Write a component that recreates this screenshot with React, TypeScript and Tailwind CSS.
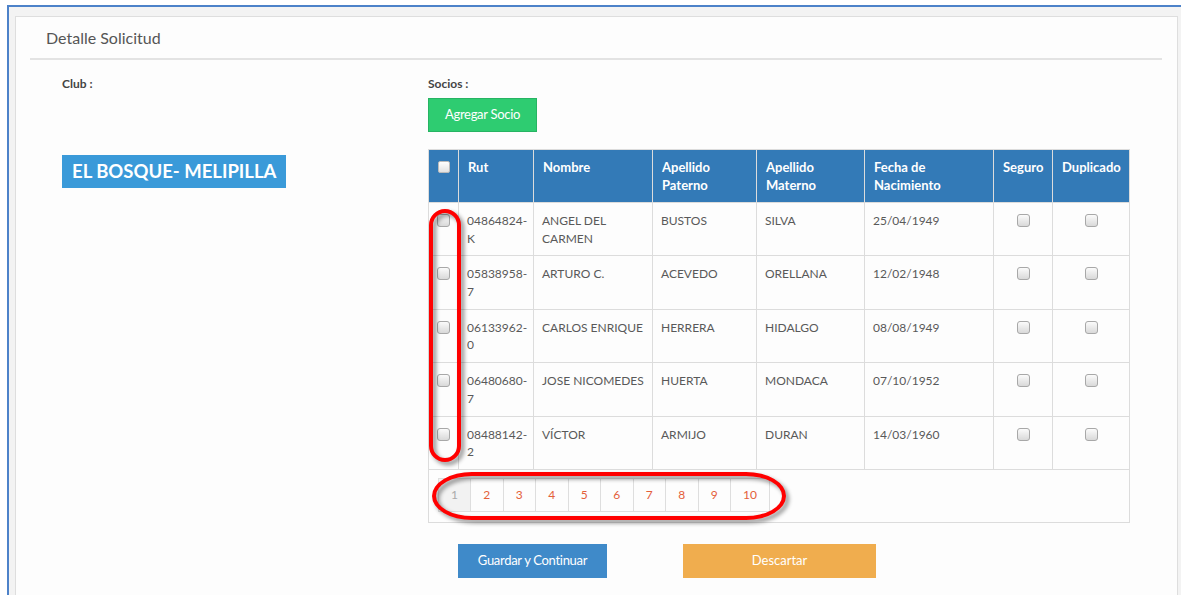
import React from "react"

type Socio = {
  rut: string
  nombre: string
  paterno: string
  materno: string
  nacimiento: string
}

const socios: Socio[] = [
  { rut: "04864824-K", nombre: "ANGEL DEL CARMEN", paterno: "BUSTOS", materno: "SILVA", nacimiento: "25/04/1949" },
  { rut: "05838958-7", nombre: "ARTURO C.", paterno: "ACEVEDO", materno: "ORELLANA", nacimiento: "12/02/1948" },
  { rut: "06133962-0", nombre: "CARLOS ENRIQUE", paterno: "HERRERA", materno: "HIDALGO", nacimiento: "08/08/1949" },
  { rut: "06480680-7", nombre: "JOSE NICOMEDES", paterno: "HUERTA", materno: "MONDACA", nacimiento: "07/10/1952" },
  { rut: "08488142-2", nombre: "VÍCTOR", paterno: "ARMIJO", materno: "DURAN", nacimiento: "14/03/1960" },
]

const pages = ["1", "2", "3", "4", "5", "6", "7", "8", "9", "10"]

function Check() {
  return (
    <div className="h-[17px] flex items-center justify-center">
      <span className="inline-block w-[13px] h-[13px] rounded-[3px] border border-[#a8a8a8] bg-linear-to-b from-[#fbfbfb] to-[#d9d9d9]" />
    </div>
  )
}

function HeadCell({ children, w }: { children?: React.ReactNode; w: string }) {
  return (
    <th className={`${w} border border-[#dcdcdc] bg-[#337ab7] align-top text-left px-[9px] pt-[8px] font-bold text-[13px] leading-[18px] text-white`}>
      {children}
    </th>
  )
}

function Cell({ children, center }: { children?: React.ReactNode; center?: boolean }) {
  return (
    <td className={`border border-[#dcdcdc] align-top px-[8px] pt-[9px] text-[12px] leading-[17.5px] text-[#595959] ${center ? "text-center" : ""}`}>
      {children}
    </td>
  )
}

export default function App() {
  return (
    <div className="w-[1181px] h-[595px] overflow-hidden bg-white font-['Lato',sans-serif]">
      <div className="ml-[7px] mt-[5px] h-[620px] border-t-2 border-l-2 border-[#4d82c9] bg-[#f3f3f3] pl-[6px] pt-[9px] pr-[3px]">
        <div className="h-full border border-[#dedede] bg-[#fdfdfd]">
          {/* panel heading */}
          <div className="mx-[14px] mr-[15px] border-b-2 border-[#e3e3e3] pl-[16px] pt-[10px] pb-[9px]">
            <div className="text-[16px] leading-[22px] text-[#555]">Detalle Solicitud</div>
          </div>

          <div className="flex pl-[46px] pt-[16px]">
            {/* club */}
            <div className="w-[366px]">
              <div className="text-[12px] leading-[16px] font-bold text-[#444]">Club :</div>
              <div className="mt-[63px] inline-block bg-[#3a9ad9] px-[10px] py-[5px] text-[18.5px] leading-[23px] font-bold text-white">
                EL BOSQUE- MELIPILLA
              </div>
            </div>

            {/* socios */}
            <div className="flex-1">
              <div className="text-[12px] leading-[16px] font-bold text-[#444]">Socios :</div>
              <button className="mt-[6px] h-[34px] w-[109px] border border-[#27b463] bg-[#2ecc71] text-[13px] text-white tracking-[-0.3px]">
                Agregar Socio
              </button>

              <div className="relative mt-[17px] w-[701px]">
                <table className="w-[701px] table-fixed border-collapse">
                  <thead>
                    <tr className="h-[53px]">
                      <th className="w-[30px] border border-[#dcdcdc] bg-[#337ab7] align-top pt-[8px]">
                        <div className="h-[18px] flex items-center justify-center">
                          <span className="inline-block w-[12px] h-[12px] rounded-[2px] border border-[#bbb] bg-linear-to-b from-white to-[#e2e2e2]" />
                        </div>
                      </th>
                      <HeadCell w="w-[75px]">Rut</HeadCell>
                      <HeadCell w="w-[119px]">Nombre</HeadCell>
                      <HeadCell w="w-[104px]">Apellido Paterno</HeadCell>
                      <HeadCell w="w-[108px]">Apellido Materno</HeadCell>
                      <HeadCell w="w-[129px]">Fecha de Nacimiento</HeadCell>
                      <HeadCell w="w-[59px]">Seguro</HeadCell>
                      <HeadCell w="w-[77px]">Duplicado</HeadCell>
                    </tr>
                  </thead>
                  <tbody>
                    {socios.map((s) => (
                      <tr key={s.rut} className="h-[53.4px]">
                        <td className="border border-[#dcdcdc] align-top pt-[9px]">
                          <Check />
                        </td>
                        <Cell>{s.rut}</Cell>
                        <Cell>{s.nombre}</Cell>
                        <Cell>{s.paterno}</Cell>
                        <Cell>{s.materno}</Cell>
                        <Cell>{s.nacimiento}</Cell>
                        <Cell center><Check /></Cell>
                        <Cell center><Check /></Cell>
                      </tr>
                    ))}
                    <tr className="h-[53px]">
                      <td colSpan={8} className="border border-[#dcdcdc] align-top pl-[9px] pt-[8px]">
                        <div className="flex">
                          {pages.map((p, i) => (
                            <div
                              key={p}
                              className={`h-[34px] flex items-center justify-center border border-[#dedede] -ml-px first:ml-0 text-[12px] ${
                                i === 0 ? "w-[33px] bg-[#f2f2f2] text-[#aaa]" : "text-[#e4603a]"
                              } ${p === "10" ? "w-[40px]" : i === 0 ? "" : "w-[33.5px]"}`}
                            >
                              {p}
                            </div>
                          ))}
                        </div>
                      </td>
                    </tr>
                  </tbody>
                </table>

                {/* red highlight marks */}
                <div className="absolute left-[1px] top-[60px] w-[32px] h-[253px] rounded-full border-[4px] border-[#f00] drop-shadow-[3px_3px_2px_rgba(0,0,0,0.45)]" />
                <div className="absolute left-[4px] top-[323px] w-[354px] h-[48px] rounded-[40px/24px] border-[4px] border-[#f00] drop-shadow-[3px_3px_2px_rgba(0,0,0,0.45)]" />
              </div>

              <div className="mt-[21px] ml-[30px] flex gap-[76px]">
                <button className="h-[34px] w-[149px] bg-[#3f8ac9] text-[13px] text-white tracking-[-0.3px]">
                  Guardar y Continuar
                </button>
                <button className="h-[34px] w-[193px] bg-[#f0ad4e] text-[13px] text-white">
                  Descartar
                </button>
              </div>
            </div>
          </div>
        </div>
      </div>
    </div>
  )
}
